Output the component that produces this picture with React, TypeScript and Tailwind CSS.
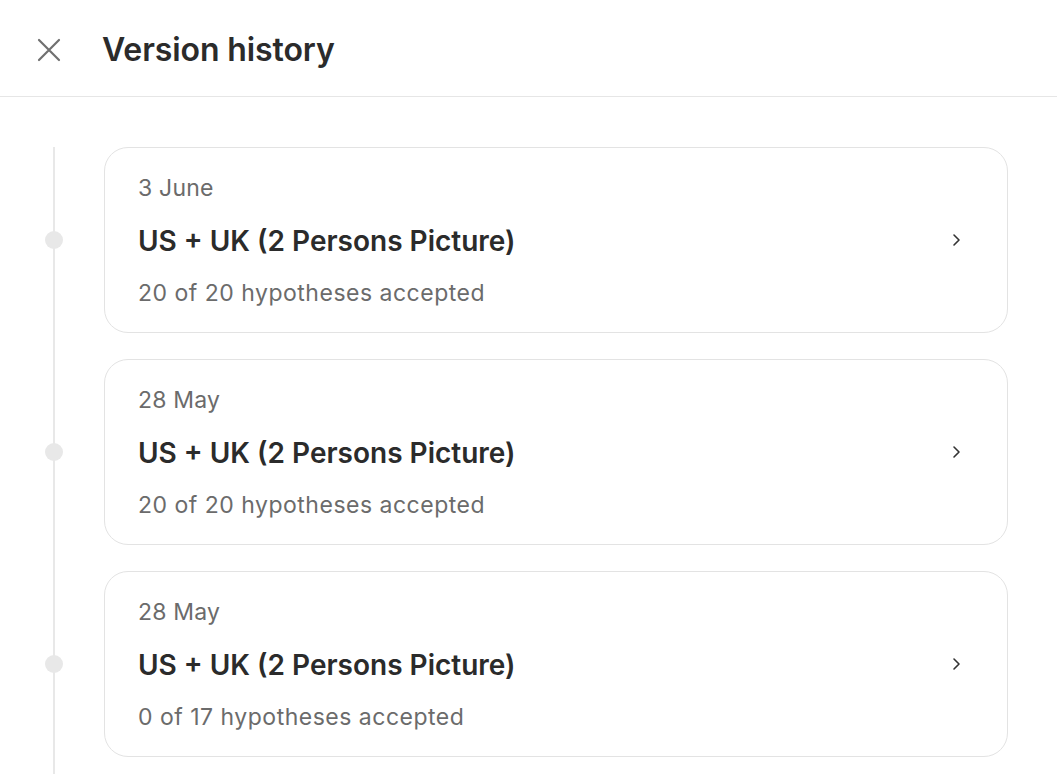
import React from "react";

const items = [
  { date: "3 June", title: "US + UK (2 Persons Picture)", sub: "20 of 20 hypotheses accepted" },
  { date: "28 May", title: "US + UK (2 Persons Picture)", sub: "20 of 20 hypotheses accepted" },
  { date: "28 May", title: "US + UK (2 Persons Picture)", sub: "0 of 17 hypotheses accepted" },
];

export default function App() {
  return (
    <div className="w-[1057px] h-[774px] overflow-hidden bg-white" style={{ fontFamily: "Inter, 'Noto Sans', sans-serif" }}>
      <header className="h-[97px] pt-[3px] border-b border-[#e6e6e6] flex items-center">
        <button className="ml-[37px] w-[24px] h-[24px] flex items-center justify-center text-[#707070]">
          <svg width="24" height="24" viewBox="0 0 24 24" fill="none" stroke="currentColor" strokeWidth="2.2" strokeLinecap="round">
            <path d="M2 2 L22 22 M22 2 L2 22" />
          </svg>
        </button>
        <h1 className="ml-[41px] text-[32px] font-semibold text-[#2b2b2b] leading-[40px] tracking-[-0.1px]">Version history</h1>
      </header>
      <div className="pt-[50px]">
        <div className="ml-[53px] border-l-2 border-[#e8e8e8] pl-[49px] pr-[49px] pb-[30px] flex flex-col gap-[26px]">
          {items.map((it, i) => (
            <div key={i} className="relative">
              <div className="absolute left-[-59px] top-1/2 -translate-y-1/2 w-[18px] h-[18px] rounded-full bg-[#e8e8e8]" />
              <div className="h-[186px] rounded-[24px] border-[1.5px] border-[#e3e3e3] bg-white pl-[33px] pr-[46px] flex items-center justify-between">
                <div className="flex flex-col">
                  <div className="text-[23px] leading-[28px] text-[#6b6b6b] tracking-[0.2px]">{it.date}</div>
                  <div className="mt-[22px] text-[28px] leading-[34px] font-semibold text-[#2b2b2b]">{it.title}</div>
                  <div className="mt-[21px] text-[23px] leading-[28px] text-[#6b6b6b] tracking-[0.5px]">{it.sub}</div>
                </div>
                <svg width="10" height="16" viewBox="0 0 10 16" fill="none" stroke="#333" strokeWidth="1.6" strokeLinecap="round" strokeLinejoin="round">
                  <path d="M3 3 L8 8 L3 13" />
                </svg>
              </div>
            </div>
          ))}
        </div>
      </div>
    </div>
  );
}
